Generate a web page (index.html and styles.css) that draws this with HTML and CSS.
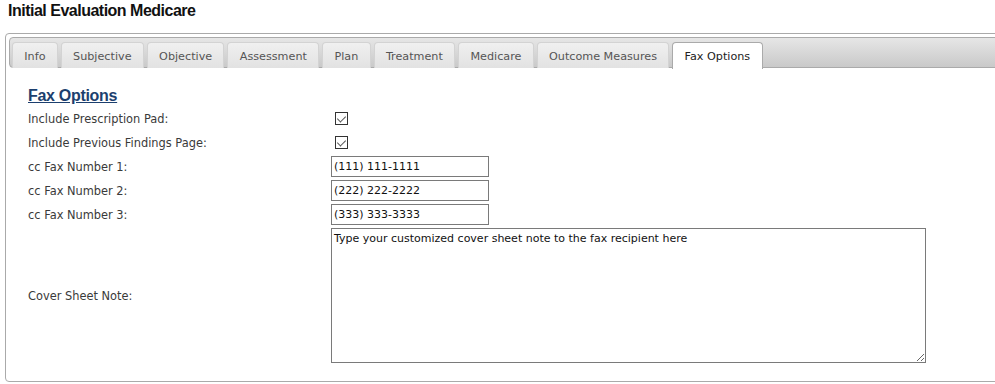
FILE: index.html
```html
<!DOCTYPE html>
<html lang="en">

<head>
    <meta charset="UTF-8">
    <title>Initial Evaluation Medicare</title>
    <link rel="stylesheet" href="styles.css">
</head>

<body>
    <h1 class="page-title">Initial Evaluation Medicare</h1>

    <div class="panel">
        <ul class="tab-bar">
            <li class="tab">Info</li>
            <li class="tab">Subjective</li>
            <li class="tab">Objective</li>
            <li class="tab">Assessment</li>
            <li class="tab">Plan</li>
            <li class="tab">Treatment</li>
            <li class="tab">Medicare</li>
            <li class="tab">Outcome Measures</li>
            <li class="tab active">Fax Options</li>
        </ul>

        <div class="tab-content">
            <h2 class="section-title">Fax Options</h2>

            <div class="form-grid">
                <label class="field-label" for="rxPad">Include Prescription Pad:</label>
                <div class="field"><input type="checkbox" id="rxPad" class="check" checked></div>

                <label class="field-label" for="prevFindings">Include Previous Findings Page:</label>
                <div class="field"><input type="checkbox" id="prevFindings" class="check" checked></div>

                <label class="field-label" for="fax1">cc Fax Number 1:</label>
                <div class="field"><input type="text" id="fax1" class="text-input" value="(111) 111-1111"></div>

                <label class="field-label" for="fax2">cc Fax Number 2:</label>
                <div class="field"><input type="text" id="fax2" class="text-input" value="(222) 222-2222"></div>

                <label class="field-label" for="fax3">cc Fax Number 3:</label>
                <div class="field"><input type="text" id="fax3" class="text-input" value="(333) 333-3333"></div>

                <label class="field-label" for="coverNote">Cover Sheet Note:</label>
                <div class="field"><textarea id="coverNote" class="note">Type your customized cover sheet note to the fax recipient here</textarea></div>
            </div>
        </div>
    </div>
</body>

</html>
```

FILE: styles.css
```css
* {
    margin: 0;
    padding: 0;
    box-sizing: border-box;
}

body {
    font-family: "DejaVu Sans", Verdana, sans-serif;
    font-size: 11px;
    color: #333333;
    background-color: #ffffff;
    overflow: hidden;
}

.page-title {
    font-family: "Liberation Sans", Arial, sans-serif;
    font-size: 16px;
    font-weight: 700;
    letter-spacing: -0.5px;
    color: #111111;
    padding: 2px 0 0 8px;
    height: 33px;
}

.panel {
    margin-left: 5px;
    width: 1010px;
    height: 349px;
    border: 1px solid #aaaaaa;
    border-radius: 4px;
    padding: 3px 3px;
}

.tab-bar {
    list-style: none;
    display: flex;
    gap: 3px;
    height: 31px;
    padding: 4px 0 0 2px;
    border: 1px solid #aaaaaa;
    border-radius: 4px;
    background: linear-gradient(#e6e6e6, #c9c9c9);
}

.tab {
    font-size: 11.2px;
    color: #555555;
    padding: 1px 11.3px 0;
    line-height: 25px;
    height: 26px;
    border: 1px solid #d3d3d3;
    border-bottom: none;
    border-radius: 4px 4px 0 0;
    background: linear-gradient(#f0f0f0, #e2e2e2);
}

.tab.active {
    background: #ffffff;
    color: #222222;
    border-color: #aaaaaa;
    height: 27px;
}

.tab-content {
    padding: 19px 0 0 19px;
}

.section-title {
    font-family: "Liberation Sans", Arial, sans-serif;
    font-size: 16px;
    font-weight: 700;
    letter-spacing: -0.3px;
    color: #1c3f6e;
    text-decoration: underline;
    margin-bottom: 3px;
}

.form-grid {
    display: grid;
    grid-template-columns: 303px auto;
    row-gap: 3px;
}

.field-label {
    display: flex;
    align-items: center;
    min-height: 21px;
    font-size: 11.4px;
    color: #3a3a3a;
}

.field {
    display: flex;
    align-items: center;
    min-height: 21px;
}

.check {
    appearance: none;
    position: relative;
    width: 13px;
    height: 13px;
    margin-left: 4px;
    border: 1px solid #333333;
    background: #ffffff;
}

.check:checked::after {
    content: "";
    position: absolute;
    left: 3px;
    top: 1px;
    width: 4px;
    height: 7px;
    border-right: 1px solid #555555;
    border-bottom: 1px solid #555555;
    transform: rotate(45deg);
}

.text-input {
    width: 158px;
    height: 21px;
    border: 1px solid #7a7a7a;
    padding: 0 2px;
    font-family: "DejaVu Sans", Verdana, sans-serif;
    font-size: 11px;
    color: #111111;
}

.note {
    width: 595px;
    height: 135px;
    border: 1px solid #7a7a7a;
    padding: 3px 2px;
    font-family: "DejaVu Sans", Verdana, sans-serif;
    font-size: 11px;
    color: #111111;
    resize: both;
}
```
